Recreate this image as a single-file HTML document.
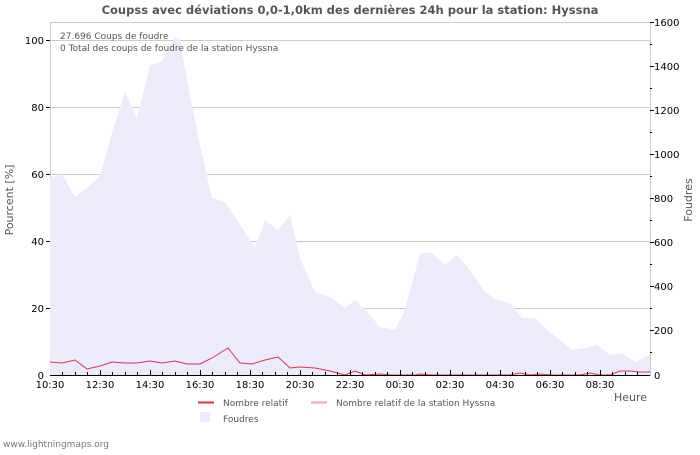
<!DOCTYPE html>
<html><head><meta charset="utf-8"><style>
body{margin:0;background:#fff;width:700px;height:450px;overflow:hidden}
text{font-family:"DejaVu Sans","Liberation Sans",sans-serif}
</style></head><body>
<svg width="700" height="450" xmlns="http://www.w3.org/2000/svg">
<text x="350" y="14" text-anchor="middle" font-size="11.5" font-weight="bold" fill="#555">Coupss avec déviations 0,0-1,0km des dernières 24h pour la station: Hyssna</text>
<rect x="50.5" y="22.5" width="600" height="353" fill="none" stroke="#ccc"/>
<g stroke="#ccc">
<line x1="50" y1="40.5" x2="650" y2="40.5"/><line x1="50" y1="107.5" x2="650" y2="107.5"/><line x1="50" y1="174.5" x2="650" y2="174.5"/><line x1="50" y1="241.5" x2="650" y2="241.5"/><line x1="50" y1="308.5" x2="650" y2="308.5"/>
</g>
<polygon fill="#ebebfc" points="50,178 62,174 75,197 87,188 100,176 112,133 125,92 137,118 150,66 162,61 175,37 180,40 187,80 200,145 212,198 225,202 237,220 255,248 265,220 278,230 290,215 300,258 315,292 330,297 345,308 355,300 370,315 380,327 395,330 405,310 420,253 432,253 445,265 457,255 470,270 485,292 497,300 510,303 522,318 535,318 547,330 560,340 572,350 585,348 597,345 610,355 622,353 635,362 650,355 650,375 50,375"/>
<polyline fill="none" stroke="#e0304a" stroke-width="1" points="50,362 62,363 75,360 87,369 100,366 112,362 125,363 137,363 150,361 162,363 175,361 187,364 200,364 212,358 228,348 240,363 252,364 265,360 278,357 290,368 300,367 315,368 330,371 345,375 355,371 365,375 380,374 390,375 415,375 420,374 430,375 510,375 520,373 530,375 540,374 550,375 580,375 590,373 600,375 610,375 620,371 630,371 640,372 650,372"/>
<line x1="50" y1="375.5" x2="650" y2="375.5" stroke="#000"/>
<g font-size="10" fill="#000" text-anchor="end">
<text x="44" y="44">100</text><text x="44" y="111">80</text><text x="44" y="178">60</text><text x="44" y="245">40</text><text x="44" y="312">20</text><text x="44" y="379">0</text>
</g>
<g stroke="#000"><line x1="46" y1="40.5" x2="50" y2="40.5"/><line x1="46" y1="107.5" x2="50" y2="107.5"/><line x1="46" y1="174.5" x2="50" y2="174.5"/><line x1="46" y1="241.5" x2="50" y2="241.5"/><line x1="46" y1="308.5" x2="50" y2="308.5"/></g>
<g font-size="10" fill="#000">
<text x="654" y="26">1600</text><text x="654" y="70">1400</text><text x="654" y="114">1200</text><text x="654" y="158">1000</text><text x="654" y="202">800</text><text x="654" y="246">600</text><text x="654" y="290">400</text><text x="654" y="334">200</text><text x="654" y="379">0</text>
</g>
<g font-size="10" fill="#000" text-anchor="middle">
<text x="50" y="388">10:30</text><text x="100" y="388">12:30</text><text x="150" y="388">14:30</text><text x="200" y="388">16:30</text><text x="250" y="388">18:30</text><text x="300" y="388">20:30</text><text x="350" y="388">22:30</text><text x="400" y="388">00:30</text><text x="450" y="388">02:30</text><text x="500" y="388">04:30</text><text x="550" y="388">06:30</text><text x="600" y="388">08:30</text>
</g>
<text x="647" y="401" font-size="11" fill="#555" text-anchor="end">Heure</text>
<text x="13" y="200" font-size="11" fill="#555" text-anchor="middle" transform="rotate(-90 13 200)">Pourcent   [%]</text>
<text x="692" y="200" font-size="11" fill="#555" text-anchor="middle" transform="rotate(-90 692 200)">Foudres</text>
<text x="60" y="39" font-size="9" fill="#555">27.696  Coups de foudre</text>
<text x="60" y="51" font-size="9" fill="#555">0 Total des coups de foudre de la station Hyssna</text>
<line x1="198" y1="402.5" x2="214" y2="402.5" stroke="#e0304a" stroke-width="2"/>
<text x="223" y="406" font-size="9" fill="#555">Nombre relatif</text>
<line x1="311" y1="402.5" x2="327" y2="402.5" stroke="#f4a0a8" stroke-width="2"/>
<text x="336" y="406" font-size="9" fill="#555">Nombre relatif de la station Hyssna</text>
<rect x="200" y="412" width="10" height="10" fill="#ebebfc"/>
<text x="223" y="422" font-size="9" fill="#555">Foudres</text>
<text x="3" y="447" font-size="9" fill="#777">www.lightningmaps.org</text>
<g stroke="#000">
<path d="M62.5 372v3M75.5 372v3M87.5 372v3M112.5 372v3M125.5 372v3M137.5 372v3M162.5 372v3M175.5 372v3M187.5 372v3M212.5 372v3M225.5 372v3M237.5 372v3M262.5 372v3M275.5 372v3M287.5 372v3M312.5 372v3M325.5 372v3M337.5 372v3M362.5 372v3M375.5 372v3M387.5 372v3M412.5 372v3M425.5 372v3M437.5 372v3M462.5 372v3M475.5 372v3M487.5 372v3M512.5 372v3M525.5 372v3M537.5 372v3M562.5 372v3M575.5 372v3M587.5 372v3M612.5 372v3M625.5 372v3M637.5 372v3"/>
<path d="M100.5 370v5M150.5 370v5M200.5 370v5M250.5 370v5M300.5 370v5M350.5 370v5M400.5 370v5M450.5 370v5M500.5 370v5M550.5 370v5M600.5 370v5"/>
<path d="M650 22.5h4M650 66.5h4M650 110.5h4M650 154.5h4M650 198.5h4M650 242.5h4M650 286.5h4M650 330.5h4M650 44.5h2M650 88.5h2M650 132.5h2M650 176.5h2M650 220.5h2M650 264.5h2M650 308.5h2M650 352.5h2"/>
</g>
</svg>
</body></html>
